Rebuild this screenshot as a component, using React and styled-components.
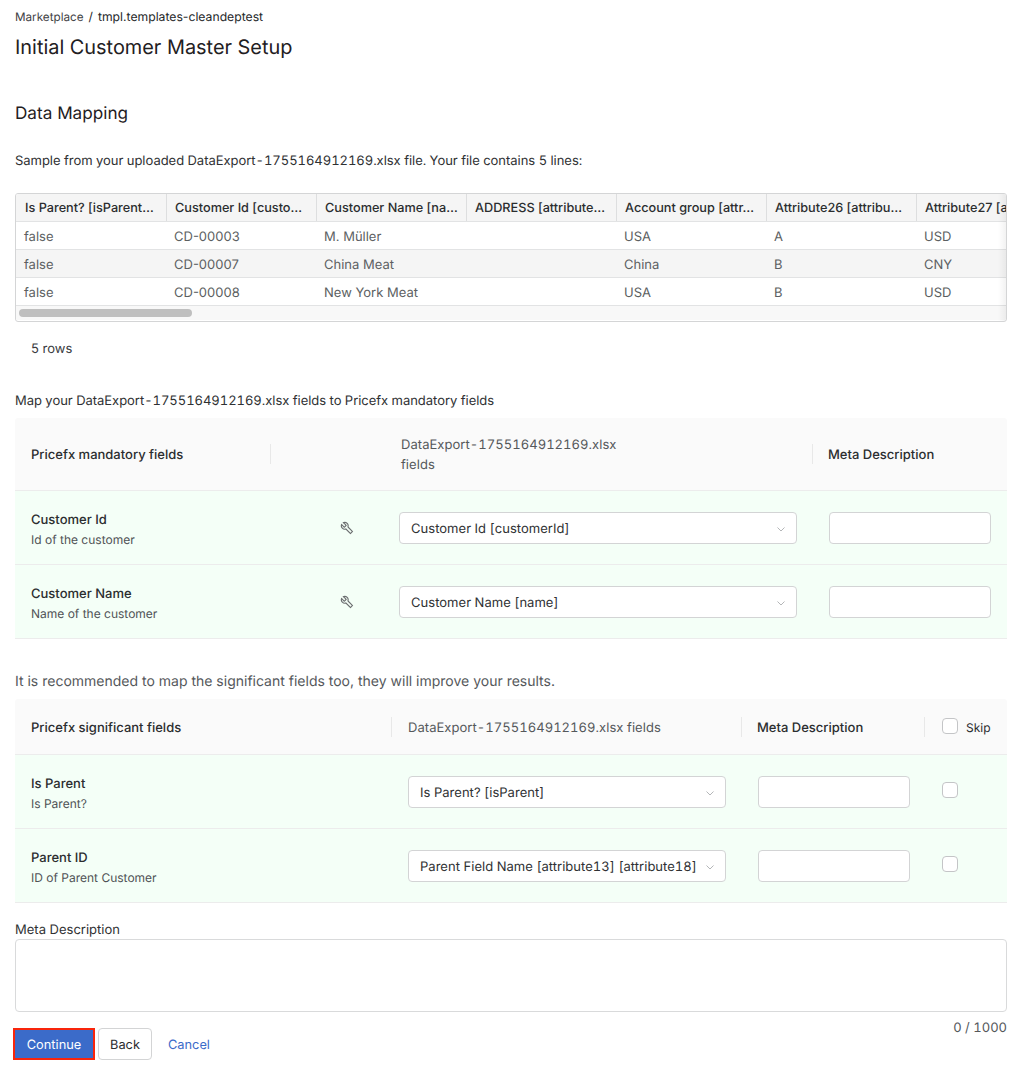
import React from 'react';
import styled, { createGlobalStyle } from 'styled-components';
import { AiOutlineTool } from 'react-icons/ai';

const Global = createGlobalStyle`
  html, body { margin: 0; padding: 0; background: #fff; }
  body {
    font-family: Inter, "Noto Sans", "Liberation Sans", sans-serif;
    font-size: 13px;
    color: #2f3133;
    text-rendering: geometricPrecision;
  }
  * { box-sizing: border-box; }
`;

const Page = styled.div`
  width: 1025px;
  height: 1089px;
  padding: 9px 18px 0 15px;
  overflow: hidden;
`;

const Breadcrumb = styled.div`
  display: flex;
  gap: 5px;
  height: 16px;
  line-height: 16px;
  font-size: 12.2px;
  color: #26282a;
  span:first-child { font-size: 11.7px; color: #3f4245; }
`;

const Title = styled.h1`
  margin: 9px 0 0;
  font-size: 19.9px;
  line-height: 26px;
  font-weight: 400;
  color: #1f2022;
`;

const SectionTitle = styled.h2`
  margin: 41px 0 0;
  font-size: 17.15px;
  line-height: 26px;
  font-weight: 400;
  color: #1f2022;
`;

const Note = styled.p`
  margin: ${p => p.$top}px 0 ${p => p.$bottom || 0}px;
  height: 18px;
  line-height: 18px;
  font-size: 13px;
  letter-spacing: -0.03px;
  font-variant-numeric: tabular-nums;
  color: #2f3133;
`;

const Advice = styled.p`
  margin: 34px 0 8px;
  height: 18px;
  line-height: 18px;
  font-size: 14px;
  color: #55585b;
`;

const GridFrame = styled.div`
  position: relative;
  margin-top: 23px;
  height: 129px;
  border: 1px solid #d4d5d6;
  border-radius: 3px;
  overflow: hidden;
`;

const GridRow = styled.div`
  display: flex;
  height: 28px;
  background: ${p => p.$bg || '#fff'};
  border-bottom: 1px solid #e2e3e4;
`;

const HeadCell = styled.div`
  flex: 0 0 150px;
  padding: 1px 8px 0;
  line-height: 27px;
  font-size: 12.7px;
  font-weight: 450;
  color: #2b2d2f;
  white-space: nowrap;
  overflow: hidden;
  &:first-child { flex-basis: 151px; padding-left: 9px; }
  &:not(:last-child) { border-right: 1px solid #dddedf; }
`;

const Cell = styled.div`
  flex: 0 0 150px;
  padding: 1px 8px 0;
  line-height: 28px;
  font-size: 13px;
  color: #5c5f62;
  white-space: nowrap;
`;

const ScrollTrack = styled.div`
  height: 14px;
  background: #f8f8f8;
  padding: 3px 3px;
`;

const ScrollThumb = styled.div`
  width: 173px;
  height: 8px;
  border-radius: 4px;
  background: #bfbfbf;
`;

const EdgeShadow = styled.div`
  position: absolute;
  top: 0;
  right: 0;
  bottom: 0;
  width: 8px;
  background: linear-gradient(to right, rgba(0,0,0,0), rgba(0,0,0,.05));
`;

const RowCount = styled.div`
  margin: 18px 0 0 16px;
  height: 18px;
  line-height: 18px;
  font-size: 13px;
  color: #3a3c3f;
`;

const MapRow = styled.div`
  display: grid;
  grid-template-columns: ${p => p.$cols};
  height: ${p => p.$height}px;
  background: ${p => (p.$head ? '#fafafa' : '#f4fff7')};
  border-bottom: 1px solid #ececec;
  border-radius: ${p => (p.$head ? '3px 3px 0 0' : '0')};
`;

const MapHead = styled.div`
  position: relative;
  display: flex;
  align-items: center;
  padding: 2px 0 0 ${p => p.$pad ?? 16}px;
  font-size: 13px;
  line-height: 20px;
  font-weight: 450;
  color: #2b2d2f;
  &::after {
    content: '';
    display: ${p => (p.$noSep ? 'none' : 'block')};
    position: absolute;
    right: 0;
    top: 50%;
    height: 20px;
    margin-top: -10px;
    border-right: 1px solid #e8e8e8;
  }
`;

const FileHead = styled(MapHead)`
  font-weight: 400;
  color: #55585b;
  letter-spacing: .05px;
  font-variant-numeric: tabular-nums;
`;

const Wrap = styled.span`
  max-width: 240px;
`;

const FieldCell = styled.div`
  display: flex;
  flex-direction: column;
  justify-content: center;
  padding: 4px 0 0 16px;
  gap: 3px;
`;

const FieldName = styled.div`
  font-size: 13px;
  line-height: 18px;
  font-weight: 450;
  color: #2b2d2f;
`;

const FieldHint = styled.div`
  font-size: 12px;
  line-height: 16px;
  color: #4f5255;
`;

const IconCell = styled.div`
  display: flex;
  align-items: center;
  justify-content: flex-end;
  padding-right: 30px;
  color: #6b6e70;
  font-size: 16px;
  svg { transform: scaleX(-1); }
`;

const ControlCell = styled.div`
  display: flex;
  align-items: center;
  padding: 0 ${p => p.$right}px 0 ${p => p.$left}px;
`;

const SelectBox = styled.div`
  flex: 1;
  display: flex;
  align-items: center;
  justify-content: space-between;
  height: 32px;
  padding: 2px 10px 0 11px;
  background: #fff;
  border: 1px solid #d3d4d5;
  border-radius: 4px;
  font-size: 13px;
  letter-spacing: .03px;
  font-variant-numeric: tabular-nums;
  color: #2f3133;
  white-space: nowrap;
  svg { flex: none; color: #b4b6b8; }
`;

const TextBox = styled.input`
  flex: 1;
  min-width: 0;
  height: 32px;
  padding: 0 10px;
  background: #fff;
  border: 1px solid #d3d4d5;
  border-radius: 4px;
  outline: none;
`;

const CheckBox = styled.span`
  display: inline-block;
  flex: none;
  width: 16px;
  height: 16px;
  background: #fff;
  border: 1px solid #c4c5c7;
  border-radius: 4px;
`;

const SkipHead = styled(MapHead)`
  gap: 8px;
  font-size: 12px;
  font-weight: 400;
  padding-left: 17px;
  ${CheckBox} { margin-top: -4px; }
`;

const CheckCell = styled.div`
  display: flex;
  align-items: center;
  padding-left: 17px;
  padding-bottom: 4px;
`;

const Label = styled.div`
  margin-top: 18px;
  height: 18px;
  line-height: 18px;
  font-size: 13px;
  color: #2f3133;
`;

const TextArea = styled.textarea`
  display: block;
  width: 100%;
  height: 73px;
  margin: 0;
  border: 1px solid #d9dadb;
  border-radius: 4px;
  outline: none;
  resize: none;
`;

const Footer = styled.div`
  display: flex;
  align-items: flex-start;
  justify-content: space-between;
  margin-top: 8px;
`;

const Actions = styled.div`
  display: flex;
  align-items: center;
  gap: 3px;
  margin: 8px 0 0 -2px;
`;

const Button = styled.button`
  width: ${p => (p.$primary ? 82 : 54)}px;
  height: 32px;
  padding: 3px 0 0;
  font-family: inherit;
  font-size: 12.8px;
  text-rendering: inherit;
  color: ${p => (p.$primary ? '#fff' : '#2b2d2f')};
  background: ${p => (p.$primary ? '#3b6bc9' : '#fff')};
  border: ${p => (p.$primary ? '2px solid #f8250c' : '1px solid #d3d4d5')};
  border-radius: ${p => (p.$primary ? 0 : 4)}px;
`;

const LinkButton = styled.a`
  margin: 3px 0 0 13px;
  font-size: 12.8px;
  color: #3b6bc9;
`;

const Counter = styled.div`
  line-height: 16px;
  font-size: 13px;
  font-variant-numeric: tabular-nums;
  color: #55585b;
`;

const Chevron = () => (
  <svg width="10" height="10" viewBox="0 0 10 10" fill="none" stroke="currentColor" strokeWidth="1">
    <path d="M1.5 3.5 5 7l3.5-3.5" />
  </svg>
);

const heads = [
  'Is Parent? [isParent…',
  'Customer Id [custo…',
  'Customer Name [na…',
  'ADDRESS [attribute…',
  'Account group [attr…',
  'Attribute26 [attribu…',
  'Attribute27 [attribu…',
];

const rows = [
  ['false', 'CD-00003', 'M. Müller', '', 'USA', 'A', 'USD'],
  ['false', 'CD-00007', 'China Meat', '', 'China', 'B', 'CNY'],
  ['false', 'CD-00008', 'New York Meat', '', 'USA', 'B', 'USD'],
];

const mandatory = [
  { name: 'Customer Id', hint: 'Id of the customer', value: 'Customer Id [customerId]' },
  { name: 'Customer Name', hint: 'Name of the customer', value: 'Customer Name [name]' },
];

const significant = [
  { name: 'Is Parent', hint: 'Is Parent?', value: 'Is Parent? [isParent]' },
  { name: 'Parent ID', hint: 'ID of Parent Customer', value: 'Parent Field Name [attribute13] [attribute18]' },
];

const mandatoryCols = '256px 114px 428px 194px';
const significantCols = '377px 350px 183px 82px';

export default function App() {
  return (
    <Page>
      <Global />
      <Breadcrumb><span>Marketplace</span><span>/</span><span>tmpl.templates-cleandeptest</span></Breadcrumb>
      <Title>Initial Customer Master Setup</Title>
      <SectionTitle>Data Mapping</SectionTitle>
      <Note $top={25}>Sample from your uploaded DataExport-1755164912169.xlsx file. Your file contains 5 lines:</Note>

      <GridFrame>
        <GridRow $bg="#f5f5f5">
          {heads.map(h => <HeadCell key={h}>{h}</HeadCell>)}
        </GridRow>
        {rows.map((r, i) => (
          <GridRow key={r[1]} $bg={i === 1 ? '#f5f5f5' : '#fff'}>
            {r.map((c, j) => <Cell key={j}>{c}</Cell>)}
          </GridRow>
        ))}
        <ScrollTrack><ScrollThumb /></ScrollTrack>
        <EdgeShadow />
      </GridFrame>
      <RowCount>5 rows</RowCount>

      <Note $top={34} $bottom={8}>Map your DataExport-1755164912169.xlsx fields to Pricefx mandatory fields</Note>
      <MapRow $head $cols={mandatoryCols} $height={73}>
        <MapHead>Pricefx mandatory fields</MapHead>
        <MapHead $noSep />
        <FileHead><Wrap>DataExport-1755164912169.xlsx fields</Wrap></FileHead>
        <MapHead $noSep $pad={15}>Meta Description</MapHead>
      </MapRow>
      {mandatory.map(f => (
        <MapRow key={f.name} $cols={mandatoryCols} $height={74}>
          <FieldCell><FieldName>{f.name}</FieldName><FieldHint>{f.hint}</FieldHint></FieldCell>
          <IconCell><AiOutlineTool /></IconCell>
          <ControlCell $left={14} $right={16}><SelectBox>{f.value}<Chevron /></SelectBox></ControlCell>
          <ControlCell $left={16} $right={16}><TextBox /></ControlCell>
        </MapRow>
      ))}

      <Advice>It is recommended to map the significant fields too, they will improve your results.</Advice>
      <MapRow $head $cols={significantCols} $height={56}>
        <MapHead>Pricefx significant fields</MapHead>
        <FileHead>DataExport-1755164912169.xlsx fields</FileHead>
        <MapHead $pad={15}>Meta Description</MapHead>
        <SkipHead $noSep><CheckBox />Skip</SkipHead>
      </MapRow>
      {significant.map(f => (
        <MapRow key={f.name} $cols={significantCols} $height={74}>
          <FieldCell><FieldName>{f.name}</FieldName><FieldHint>{f.hint}</FieldHint></FieldCell>
          <ControlCell $left={16} $right={16}><SelectBox>{f.value}<Chevron /></SelectBox></ControlCell>
          <ControlCell $left={16} $right={15}><TextBox /></ControlCell>
          <CheckCell><CheckBox /></CheckCell>
        </MapRow>
      ))}

      <Label>Meta Description</Label>
      <TextArea />
      <Footer>
        <Actions>
          <Button $primary>Continue</Button>
          <Button>Back</Button>
          <LinkButton>Cancel</LinkButton>
        </Actions>
        <Counter>0 / 1000</Counter>
      </Footer>
    </Page>
  );
}
